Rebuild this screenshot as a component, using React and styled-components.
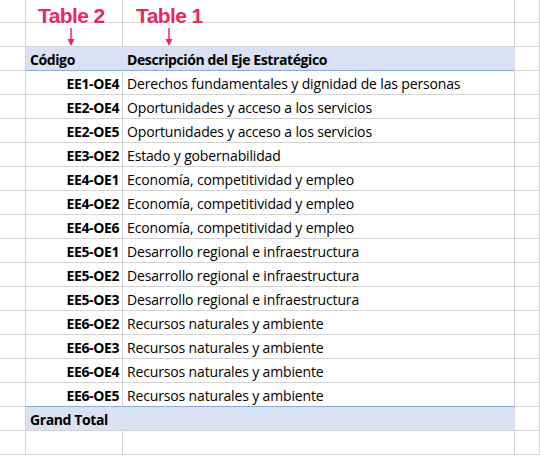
import React from 'react';
import styled, { createGlobalStyle } from 'styled-components';

const Global = createGlobalStyle`
  body { margin: 0; background: #fff; font-family: "Open Sans", "Liberation Sans", Arial, sans-serif; }
`;

const Sheet = styled.div`
  position: relative;
  width: 540px;
  height: 458px;
  overflow: hidden;
  margin-top: -1px;
  display: grid;
  grid-template-columns: 26px 97px 392px 25px;
  grid-auto-rows: 24px;
`;

const Cell = styled.div`
  box-sizing: border-box;
  border-right: 1px solid ${p => (p.$band ? 'transparent' : '#d4d4d4')};
  border-bottom: 1px solid ${p => (p.$line ? '#8ea9db' : '#d4d4d4')};
  background: ${p => (p.$band ? '#d9e1f2' : '#fff')};
  font-size: 14px;
  font-weight: ${p => (p.$bold ? 700 : 400)};
  color: #000;
  display: flex;
  align-items: center;
  justify-content: ${p => (p.$right ? 'flex-end' : 'flex-start')};
  padding: 1px 3px 0 4px;
  white-space: nowrap;
  letter-spacing: ${p => (p.$bold ? '-0.4px' : '-0.15px')};
`;

const Callout = styled.div`
  position: absolute;
  top: 5px;
  left: ${p => p.$x}px;
  display: flex;
  flex-direction: column;
  align-items: center;
`;

const Label = styled.span`
  font-family: "Liberation Sans", Arial, sans-serif;
  font-weight: 700;
  font-size: 21px;
  color: #e8285f;
  letter-spacing: -0.6px;
  line-height: 24px;
  text-shadow: -1px -1px 0 #fff, 1px -1px 0 #fff, -1px 1px 0 #fff, 1px 1px 0 #fff, 0 0 3px #fff;
`;

const rows = [
  ['EE1-OE4', 'Derechos fundamentales y dignidad de las personas'],
  ['EE2-OE4', 'Oportunidades y acceso a los servicios'],
  ['EE2-OE5', 'Oportunidades y acceso a los servicios'],
  ['EE3-OE2', 'Estado y gobernabilidad'],
  ['EE4-OE1', 'Economía, competitividad y empleo'],
  ['EE4-OE2', 'Economía, competitividad y empleo'],
  ['EE4-OE6', 'Economía, competitividad y empleo'],
  ['EE5-OE1', 'Desarrollo regional e infraestructura'],
  ['EE5-OE2', 'Desarrollo regional e infraestructura'],
  ['EE5-OE3', 'Desarrollo regional e infraestructura'],
  ['EE6-OE2', 'Recursos naturales y ambiente'],
  ['EE6-OE3', 'Recursos naturales y ambiente'],
  ['EE6-OE4', 'Recursos naturales y ambiente'],
  ['EE6-OE5', 'Recursos naturales y ambiente'],
];

function Arrow() {
  return (
    <svg width="8" height="18" viewBox="0 0 8 18">
      <line x1="4" y1="0" x2="4" y2="12" stroke="#e8285f" strokeWidth="1.5" />
      <polygon points="0.5,11 7.5,11 4,18" fill="#e8285f" />
    </svg>
  );
}

function Empty({ n }) {
  return Array.from({ length: n }, (_, i) => <Cell key={i} />);
}

export default function App() {
  return (
    <>
      <Global />
      <Sheet>
        <Empty n={8} />
        <Cell />
        <Cell $band $line $bold>Código</Cell>
        <Cell $band $line $bold>Descripción del Eje Estratégico</Cell>
        <Cell />
        {rows.map(([c, d], i) => (
          <React.Fragment key={c}>
            <Cell />
            <Cell $bold $right $line={i === rows.length - 1}>{c}</Cell>
            <Cell $line={i === rows.length - 1}>{d}</Cell>
            <Cell />
          </React.Fragment>
        ))}
        <Cell />
        <Cell $band $bold>Grand Total</Cell>
        <Cell $band />
        <Cell />
        <Empty n={4} />
        <Callout $x={38}>
          <Label>Table 2</Label>
          <Arrow />
        </Callout>
        <Callout $x={136}>
          <Label>Table 1</Label>
          <Arrow />
        </Callout>
      </Sheet>
    </>
  );
}
